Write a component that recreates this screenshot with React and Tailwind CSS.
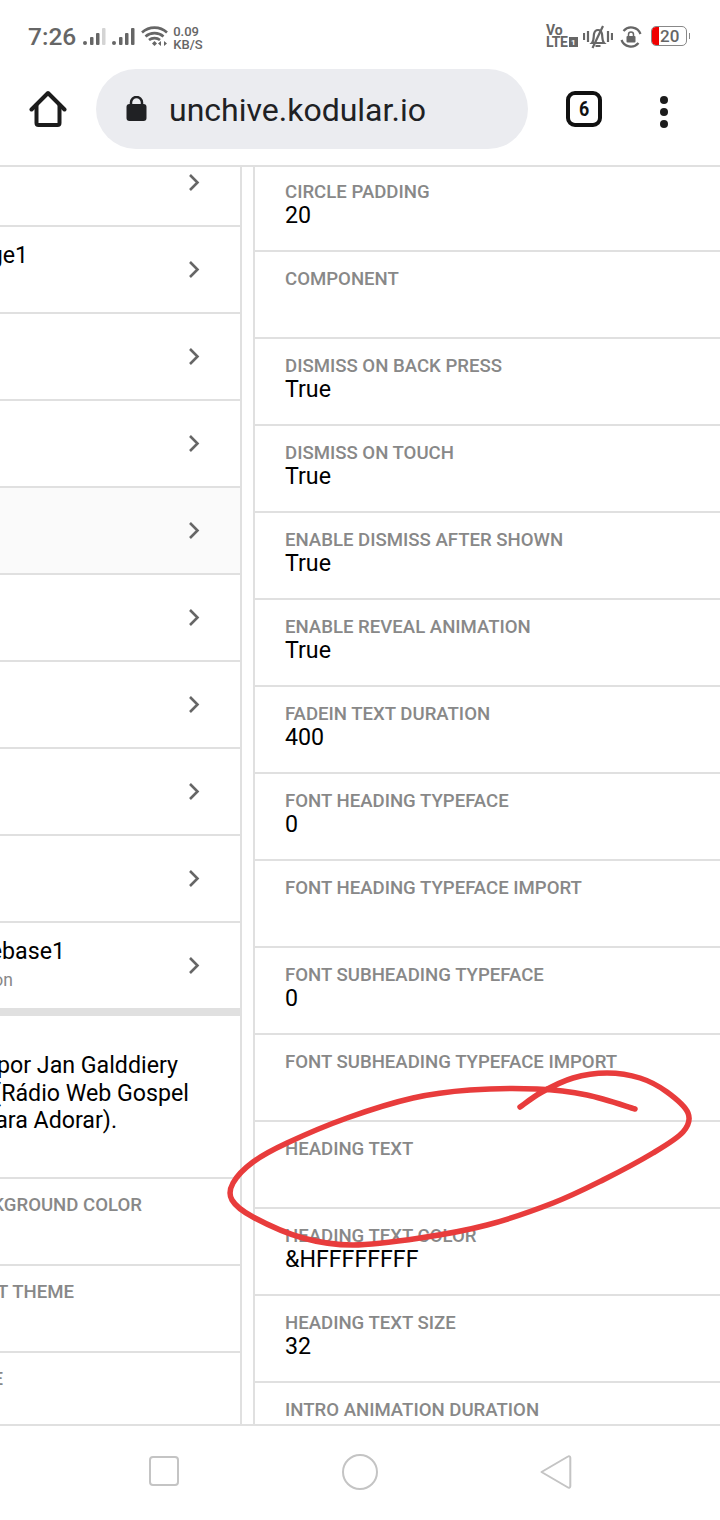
const FONT = { fontFamily: "Roboto, 'Liberation Sans', sans-serif" };

const scribble = [
  [520, 1107], [542, 1092], [573, 1078], [607, 1073], [640, 1078], [667, 1092], [688, 1113], [683, 1132],
  [653, 1153], [603, 1180], [553, 1203], [487, 1225], [420, 1238], [353, 1245], [303, 1238], [253, 1217],
  [232, 1200], [233, 1183], [253, 1162], [287, 1143], [347, 1118], [413, 1098], [470, 1090], [537, 1089],
  [587, 1095], [635, 1109],
];

function smooth(p) {
  let d = `M${p[0][0]} ${p[0][1]}`;
  for (let i = 0; i < p.length - 1; i++) {
    const a = p[Math.max(i - 1, 0)], b = p[i], c = p[i + 1], e = p[Math.min(i + 2, p.length - 1)];
    d += ` C${b[0] + (c[0] - a[0]) / 6} ${b[1] + (c[1] - a[1]) / 6} ${c[0] - (e[0] - b[0]) / 6} ${c[1] - (e[1] - b[1]) / 6} ${c[0]} ${c[1]}`;
  }
  return d;
}

const rightRows = [
  ["Circle Padding", "20"],
  ["Component", ""],
  ["Dismiss on Back Press", "True"],
  ["Dismiss on Touch", "True"],
  ["Enable Dismiss After Shown", "True"],
  ["Enable Reveal Animation", "True"],
  ["FadeIn Text Duration", "400"],
  ["Font Heading Typeface", "0"],
  ["Font Heading Typeface Import", ""],
  ["Font Subheading Typeface", "0"],
  ["Font Subheading Typeface Import", ""],
  ["Heading Text", ""],
  ["Heading Text Color", "&HFFFFFFFF"],
  ["Heading Text Size", "32"],
  ["Intro Animation Duration", ""],
];

function Clip({ end, children, className = "" }) {
  return (
    <div className={`flex justify-end whitespace-nowrap ${className}`} style={{ width: end }}>
      <span className="shrink-0">{children}</span>
    </div>
  );
}

function Signal({ fade }) {
  return (
    <svg width="23" height="18" viewBox="0 0 23 18" fill="#666">
      <rect x="0" y="13" width="4" height="4" rx="2" />
      <rect x="7" y="9" width="3.5" height="8" rx="1" />
      <rect x="13" y="5" width="3.5" height="12" rx="1" />
      <rect x="19" y="0" width="3.5" height="17" rx="1" fill={fade ? "#d4d4d4" : "#666"} />
    </svg>
  );
}

function StatusBar() {
  return (
    <div className="relative flex h-[69px] items-start justify-between pl-[28px] pr-[30px] pt-[22px] text-[#666]">
      <div className="flex items-start">
        <span className="text-[24.500px] font-medium leading-[30px]">7:26</span>
        <div className="ml-[7px] mt-[6px] flex gap-[6px]">
          <Signal fade />
          <Signal />
        </div>
        <svg className="ml-[6px] mt-[3px]" width="28" height="22" viewBox="0 0 28 22" fill="none" stroke="#666" strokeWidth="2.6">
          <path d="M1 7.5C8 1 19 1 26 7.5" />
          <path d="M4.5 11.5C9.5 7 17.5 7 22.5 11.5" />
          <path d="M8 15C11 12.5 16 12.5 19 15" />
          <path d="M11 18.5l2.5-2.5 2.5 2.5-2.5 2.5z" fill="#666" stroke="none" />
          <path d="M20 16v5l-3-2.5zM23 16v5l3-2.5z" fill="#666" stroke="none" />
        </svg>
        <div className="ml-[4px] mt-[3px] text-[13px] font-medium leading-[13px]">
          <div>0.09</div>
          <div>KB/S</div>
        </div>
      </div>
      <div className="flex items-start">
        <div className="mt-[3px] w-[33px] text-[14px] font-bold leading-[11.500px]">
          <div>Vo</div>
          <div className="flex items-center tracking-[-0.3px]">
            LTE<span className="ml-[1px] flex h-[10px] w-[9px] items-center justify-center bg-[#666] text-[8px] text-white">1</span>
          </div>
        </div>
        <svg className="ml-[4px] mt-[3px]" width="30" height="24" viewBox="0 0 30 24" fill="none" stroke="#666" strokeWidth="2.2">
          <path d="M1 8v7M5 6v11M25 6v11M29 8v7" />
          <path d="M9 18c2-2 1.500-6 2-9 .5-2.500 2-4 4-4s3.500 1.500 4 4c.5 3 0 7 2 9z" />
          <path d="M12.500 21h5M20 1L9.500 23" />
        </svg>
        <svg className="ml-[7px] mt-[4px]" width="22" height="22" viewBox="0 0 22 22" fill="none" stroke="#666" strokeWidth="2.2">
          <path d="M3.500 5A10 10 0 0 1 20.500 8M18.500 17A10 10 0 0 1 1.500 14" />
          <rect x="6.500" y="10" width="9" height="6.500" rx="1" fill="#666" stroke="none" />
          <path d="M8.500 10V8.500a2.500 2.500 0 0 1 5 0V10" strokeWidth="1.500" />
        </svg>
        <div className="relative ml-[9px] mt-[4px] flex h-[20px] w-[36px] items-center overflow-hidden rounded-[5px] border border-[#888]">
          <div className="h-full w-[7px] rounded-l-[3px] bg-[#f00000]" />
          <span className="ml-[1px] text-[17px] font-medium leading-[18px]">20</span>
        </div>
        <div className="ml-[2px] mt-[11px] h-[6px] w-[1px] bg-[#888]" />
      </div>
    </div>
  );
}

function Toolbar() {
  return (
    <div className="flex h-[98px] items-start border-b-2 border-[#e0e0e0]">
      <svg className="ml-[29px] mt-[21px]" width="38" height="38" viewBox="0 0 38 38" fill="none" stroke="#1c1c1c" strokeWidth="4" strokeLinejoin="round" strokeLinecap="round">
        <path d="M2.500 19.500L19 3l16.500 16.500" />
        <path d="M7.500 15v18a2 2 0 0 0 2 2h19a2 2 0 0 0 2-2V15" />
      </svg>
      <div className="ml-[29px] flex h-[80px] w-[432px] items-center rounded-[40px] bg-[#ebecf0] pl-[30px]">
        <svg width="21" height="26" viewBox="0 0 21 26" fill="#202124">
          <rect x="0.500" y="8" width="20" height="17" rx="3" />
          <path d="M5 9V6.500a5.500 5.500 0 0 1 11 0V9" fill="none" stroke="#202124" strokeWidth="2.500" />
        </svg>
        <span className="ml-[22px] mt-[2px] text-[32px] leading-[40px] text-[#202124]">unchive.kodular.io</span>
      </div>
      <div className="ml-[38px] mt-[22px] flex h-[36px] w-[36px] items-center justify-center rounded-[9px] border-[4px] border-[#111] text-[21px] font-bold leading-none text-[#111]">
        <span className="scale-x-[0.85]">6</span>
      </div>
      <div className="ml-[58px] mt-[27px] flex flex-col gap-[4px]">
        <div className="h-[8px] w-[8px] rounded-full bg-[#1c1c1c]" />
        <div className="h-[8px] w-[8px] rounded-full bg-[#1c1c1c]" />
        <div className="h-[8px] w-[8px] rounded-full bg-[#1c1c1c]" />
      </div>
    </div>
  );
}

function Chevron() {
  return (
    <svg width="12" height="18" viewBox="0 0 12 18" fill="none" stroke="#666" strokeWidth="2.600" className="absolute left-[188px] top-1/2 -mt-[10px]">
      <path d="M2 2l7.500 7.500L2 17" />
    </svg>
  );
}

function LeftNavRow({ title, titleEnd, sub, subEnd, active, last }) {
  return (
    <div className={`relative h-[87px] border-b-2 pt-[14px] ${last ? "border-transparent" : "border-[#e0e0e0]"} ${active ? "bg-[#fafafa]" : ""}`}>
      {title && <Clip end={titleEnd} className="text-[23.200px] leading-[28px] text-black">{title}</Clip>}
      {sub && <Clip end={subEnd} className="mt-[3px] text-[17.500px] leading-[24px] text-[#888]">{sub}</Clip>}
      <Chevron />
    </div>
  );
}

function LeftPropRow({ label, end }) {
  return (
    <div className="h-[87px] border-b-2 border-[#e0e0e0] pt-[14px]">
      <Clip end={end} className="text-[18.600px] font-medium leading-[24px] text-[#888]">{label}</Clip>
    </div>
  );
}

function LeftPanel() {
  return (
    <div className="h-full w-[242px] shrink-0 overflow-hidden border-r-2 border-[#e0e0e0]">
      <div className="-mt-[27px]">
        <LeftNavRow />
        <LeftNavRow title="Page1" titleEnd={28} />
        <LeftNavRow />
        <LeftNavRow />
        <LeftNavRow active />
        <LeftNavRow />
        <LeftNavRow />
        <LeftNavRow />
        <LeftNavRow />
        <LeftNavRow title="Firebase1" titleEnd={65} sub="Button" subEnd={13} last />
        <div className="-mt-[2px] h-[8px] bg-[#e0e0e0]" />
        <div className="h-[163px] border-b-2 border-[#e0e0e0] pt-[36px] text-[23.200px] leading-[27.500px] text-black">
          <Clip end={178}>Feito por Jan Galddiery</Clip>
          <Clip end={189}>(Rádio Web Gospel</Clip>
          <Clip end={117}>Para Adorar).</Clip>
        </div>
        <LeftPropRow label="BACKGROUND COLOR" end={142} />
        <LeftPropRow label="LIGHT THEME" end={74} />
        <LeftPropRow label="TITLE" end={3} />
      </div>
    </div>
  );
}

function RightPanel() {
  return (
    <div className="ml-[11px] h-full flex-1 overflow-hidden border-l-2 border-[#e0e0e0]">
      <div className="-mt-[2px]">
        {rightRows.map(([label, value]) => (
          <div key={label} className="h-[87px] border-b-2 border-[#e0e0e0] pl-[30px] pt-[15px]">
            <div className="text-[18.600px] font-medium uppercase leading-[24px] text-[#888]">{label}</div>
            <div className="text-[23.200px] leading-[22px] text-black">{value}</div>
          </div>
        ))}
      </div>
    </div>
  );
}

function NavBar() {
  return (
    <div className="relative h-[96px] border-t-2 border-[#e0e0e0]">
      <div className="absolute left-[149px] top-[30px] h-[30px] w-[30px] rounded-[4px] border-2 border-[#c4c4c4]" />
      <div className="absolute left-[342px] top-[28px] h-[36px] w-[36px] rounded-full border-2 border-[#c4c4c4]" />
      <svg className="absolute left-[540px] top-[27px]" width="32" height="38" viewBox="0 0 32 38" fill="none" stroke="#c4c4c4" strokeWidth="2" strokeLinejoin="round">
        <path d="M1.500 19L28 3.500a1.500 1.500 0 0 1 2.300 1.300v28.400a1.500 1.500 0 0 1-2.300 1.300z" />
      </svg>
    </div>
  );
}

export default function App() {
  return (
    <div className="relative flex h-[1520px] w-[720px] flex-col overflow-hidden bg-white" style={FONT}>
      <StatusBar />
      <Toolbar />
      <div className="flex min-h-0 flex-1">
        <LeftPanel />
        <RightPanel />
      </div>
      <NavBar />
      <svg className="pointer-events-none absolute left-0 top-0" width="720" height="1520" fill="none">
        <path d={smooth(scribble)} stroke="#e83c3c" strokeWidth="5.500" strokeLinecap="round" strokeLinejoin="round" />
      </svg>
    </div>
  );
}
